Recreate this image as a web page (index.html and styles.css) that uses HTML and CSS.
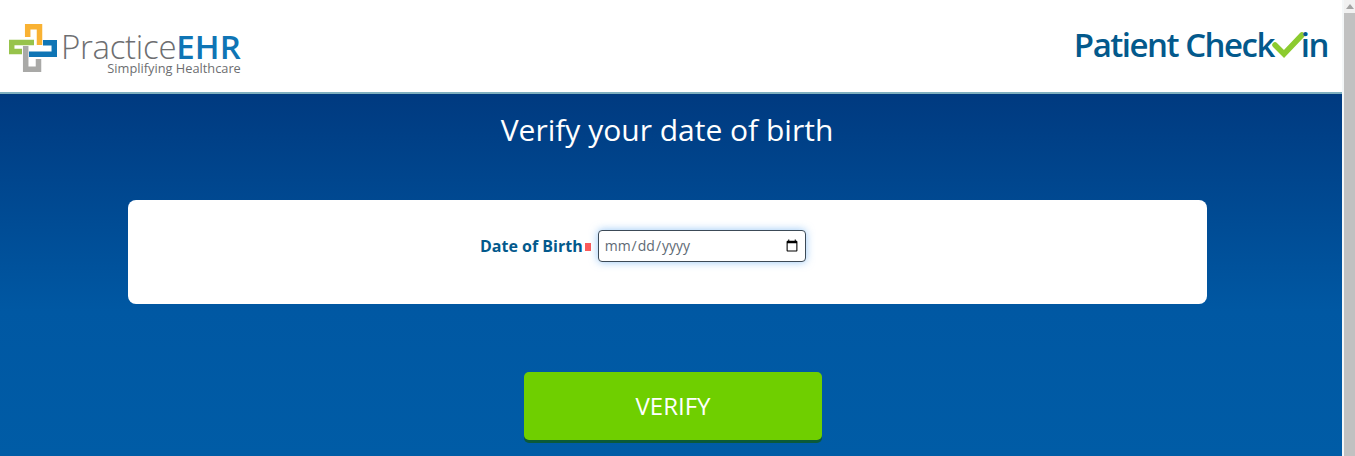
FILE: index.html
```html
<!DOCTYPE html>
<html lang="en">
<head>
<meta charset="UTF-8">
<title>Patient Check-in</title>
<link rel="stylesheet" href="styles.css">
</head>
<body>
<div class="page">
    <header class="top">
        <div class="logo">
            <svg class="logo-mark" width="48" height="48" viewBox="9 24 48 48" fill="none" stroke-width="5.5">
                <path d="M34 42.5H11.7V51.5H22" stroke="#97c34b"/>
                <path d="M43 42.7H54.3V54.3H29" stroke="#0f75b5"/>
                <path d="M27.7 37V26.7H39.5V45" stroke="#f9b233"/>
                <path d="M25.7 46V69.3H38.5V59" stroke="#a9a9a7"/>
            </svg>
            <div class="logo-text">
                <div class="logo-name">Practice<b>EHR</b></div>
                <div class="logo-sub">Simplifying Healthcare</div>
            </div>
        </div>
        <div class="checkin">
            <span>Patient Check</span>
            <svg class="tick" width="34" height="28" viewBox="0 0 34 28" fill="none">
                <path d="M4 15L13 24L31 5" stroke="#8ccb2f" stroke-width="5.5" stroke-linecap="round"/>
            </svg>
            <span>in</span>
        </div>
    </header>
    <main class="main">
        <h1 class="title">Verify your date of birth</h1>
        <section class="card">
            <label class="field-label" for="dob">Date of Birth</label>
            <span class="req"></span>
            <input class="date-box" id="dob" type="date">
        </section>
        <button class="verify">VERIFY</button>
    </main>
</div>
<div class="scrollbar">
    <div class="arrow"></div>
    <div class="thumb"></div>
</div>
</body>
</html>
```

FILE: styles.css
```css
html, body {
    margin: 0;
    height: 456px;
    overflow: hidden;
}
body {
    display: flex;
    font-family: "Open Sans", "Noto Sans", sans-serif;
    background: #fff;
}
.page {
    flex: 1;
    min-width: 0;
    display: flex;
    flex-direction: column;
}
.top {
    height: 94px;
    flex: none;
    box-sizing: border-box;
    border-bottom: 2px solid #7fb0bf;
    display: flex;
    justify-content: space-between;
    align-items: flex-start;
    padding: 0 14px 0 9px;
}
.logo {
    display: flex;
    padding-top: 24px;
}
.logo-mark {
    flex: none;
}
.logo-text {
    margin-left: 4px;
    padding-top: 7px;
}
.logo-name {
    font: 33px/32px "Open Sans", sans-serif;
    font-weight: 300;
    color: #6d6e71;
    letter-spacing: -.3px;
}
.logo-name b {
    font-weight: 600;
    color: #0f75b5;
    letter-spacing: .1px;
}
.logo-sub {
    font-size: 12.8px;
    line-height: 10px;
    color: #6d6e71;
    text-align: right;
}
.checkin {
    display: flex;
    align-items: flex-start;
    font-size: 33px;
    line-height: 46px;
    font-weight: 600;
    letter-spacing: -1.5px;
    color: #03598c;
    padding-top: 22px;
}
.tick {
    flex: none;
    margin: 8px -4px 0 -3px;
}
.main {
    flex: 1;
    min-height: 0;
    background: linear-gradient(#003a80, #0058a3 60%, #005ca6);
    display: flex;
    flex-direction: column;
    align-items: center;
}
.title {
    margin: 16px 8px 0 0;
    font-size: 30px;
    line-height: 40px;
    font-weight: 400;
    color: #fff;
}
.card {
    box-sizing: border-box;
    width: 1079px;
    height: 104px;
    margin: 50px 7px 0 0;
    border-radius: 8px;
    background: #fff;
    display: flex;
    align-items: flex-start;
    padding: 30px 0 0 352px;
}
.field-label {
    font-size: 16px;
    line-height: 32px;
    font-weight: 700;
    color: #03598c;
}
.req {
    width: 6px;
    height: 8px;
    margin: 13px 7px 0 2px;
    background: #fb5a5a;
}
.date-box {
    box-sizing: border-box;
    width: 208px;
    height: 32px;
    border: 1px solid #3c4a57;
    border-radius: 4px;
    background: #fff;
    box-shadow: 0 0 8px rgba(80, 160, 240, .6);
    padding: 0 4px 1px 5px;
    font: 14px "Open Sans", sans-serif;
    color: #5e6a75;
}
.verify {
    width: 298px;
    height: 68px;
    margin: 68px 0 0 4px;
    border: 0;
    padding: 0 0 2px;
    border-radius: 5px;
    box-shadow: 0 3px 0 #0b5a3a;
    background: #6fcf00;
    color: #fff;
    font: 24px "Open Sans", sans-serif;
}
.scrollbar {
    width: 11px;
    flex: none;
    border-left: 2px solid #f4f7f8;
    background: #f1f1f1;
}
.arrow {
    width: 0;
    height: 0;
    margin: 4px auto;
    border-left: 4px solid transparent;
    border-right: 4px solid transparent;
    border-bottom: 5px solid #a3a3a3;
}
.thumb {
    height: 443px;
    background: #c1c1c1;
}
```
